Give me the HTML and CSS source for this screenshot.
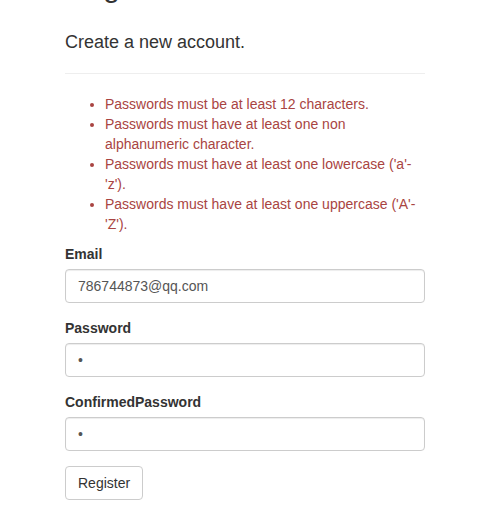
FILE: index.html
```html
<!DOCTYPE html>
<html>
<head>
<meta charset="utf-8">
<link rel="stylesheet" href="styles.css">
</head>
<body>
<div class="container">
  <h2 class="title">Register</h2>
  <div class="row">
    <form class="form">
      <h4 class="subtitle">Create a new account.</h4>
      <hr class="divider">
      <div class="text-danger">
        <ul class="errors">
          <li>Passwords must be at least 12 characters.</li>
          <li>Passwords must have at least one non alphanumeric character.</li>
          <li>Passwords must have at least one lowercase ('a'-'z').</li>
          <li>Passwords must have at least one uppercase ('A'-'Z').</li>
        </ul>
      </div>
      <div class="form-group">
        <label class="label" for="email">Email</label>
        <input class="form-control" id="email" type="text" value="786744873@qq.com">
      </div>
      <div class="form-group">
        <label class="label" for="pw">Password</label>
        <input class="form-control" id="pw" type="password" value="a">
      </div>
      <div class="form-group">
        <label class="label" for="cpw">ConfirmedPassword</label>
        <input class="form-control" id="cpw" type="password" value="a">
      </div>
      <button type="button" class="btn">Register</button>
    </form>
  </div>
</div>
</body>
</html>
```
FILE: styles.css
```css
html, body {
  margin: 0;
  padding: 0;
  background: #fff;
}
body {
  font-family: "Liberation Sans", Arial, Helvetica, sans-serif;
  font-size: 14px;
  line-height: 1.42857143;
  color: #333;
  overflow: hidden;
}
.container {
  width: 360px;
  padding-left: 65px;
}
.title {
  font-size: 30px;
  font-weight: 500;
  line-height: 1.1;
  margin: -30px 0 0 0;
  color: #333;
}
.row {
  display: flow-root;
}
.subtitle {
  font-size: 18px;
  font-weight: 500;
  line-height: 1.1;
  margin: 30px 0 0 0;
  color: #333;
}
.divider {
  margin: 20px 0;
  border: 0;
  border-top: 1px solid #eee;
  height: 0;
}
.text-danger {
  color: #a94442;
}
.errors {
  margin: 0 0 10px 0;
  padding-left: 40px;
}
.form-group {
  margin-bottom: 15px;
}
.label {
  display: inline-block;
  max-width: 100%;
  margin-bottom: 5px;
  font-weight: 700;
}
.form-control {
  display: block;
  width: 100%;
  height: 34px;
  box-sizing: border-box;
  padding: 6px 12px;
  font-family: inherit;
  font-size: 14px;
  line-height: 1.42857143;
  color: #555;
  background: #fff;
  border: 1px solid #ccc;
  border-radius: 4px;
  box-shadow: inset 0 1px 1px rgba(0,0,0,.075);
  outline: none;
}
.btn {
  display: inline-block;
  padding: 6px 12px;
  font-family: inherit;
  font-size: 14px;
  line-height: 1.42857143;
  color: #333;
  background: #fff;
  border: 1px solid #ccc;
  border-radius: 4px;
  cursor: pointer;
}
```
